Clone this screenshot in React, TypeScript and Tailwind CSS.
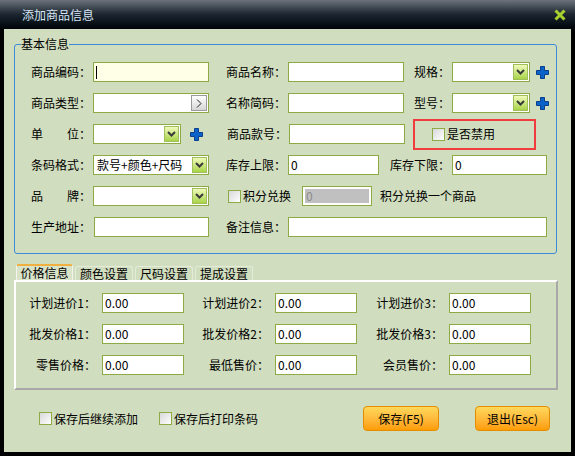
import React from 'react';

const font = { fontFamily: '"Noto Sans CJK SC", "Liberation Sans", sans-serif' };

function Input({ w, value, focus, className = '' }: { w: string; value?: string; focus?: boolean; className?: string }) {
  return (
    <div
      className={`${w} h-[20px] border border-[#8daa45] ${focus ? 'bg-[#ffffe8]' : 'bg-white'} flex items-center px-[2px] text-[12px] text-black ${className}`}
    >
      {focus && <span className="w-px h-[13px] bg-black" />}
      {value}
    </div>
  );
}

function DropBtn() {
  return (
    <span className="ml-auto mr-[1px] w-[15px] h-[16px] border border-[#9fbf5a] bg-gradient-to-b from-[#f0fab8] to-[#a9d444] flex items-center justify-center">
      <svg width="9" height="6" viewBox="0 0 9 6">
        <path d="M1 1 L4.5 4.5 L8 1" stroke="#3a3a3a" strokeWidth="2" fill="none" />
      </svg>
    </span>
  );
}

function Select({ w, value }: { w: string; value?: string }) {
  return (
    <div className={`${w} h-[20px] border border-[#8daa45] bg-white flex items-center pl-[3px] text-[12px] text-black`}>
      {value}
      <DropBtn />
    </div>
  );
}

function Plus({ className = '' }: { className?: string }) {
  return (
    <svg width="13" height="13" viewBox="0 0 13 13" className={className}>
      <path d="M4.5 0.5 H8.5 V4.5 H12.5 V8.5 H8.5 V12.5 H4.5 V8.5 H0.5 V4.5 H4.5 Z" fill="#0b62c9" stroke="#0a3f8c" strokeWidth="1" />
    </svg>
  );
}

function Check({ label }: { label: string }) {
  return (
    <div className="flex items-center gap-[2px] text-[12px] text-black">
      <span className="w-[13px] h-[13px] border border-[#8daa45] bg-gradient-to-br from-[#d8d8d8] to-white" />
      {label}
    </div>
  );
}

function Label({ text, w = 'w-[62px]', right }: { text: string; w?: string; right?: boolean }) {
  return <span className={`${w} shrink-0 text-[12px] text-black whitespace-pre ${right ? 'text-right pr-[2px]' : ''}`}>{text}</span>;
}

function PriceRow({ items }: { items: [string, string][] }) {
  return (
    <div className="flex items-center h-[20px]">
      {items.map(([l, w], i) => (
        <React.Fragment key={i}>
          <span className={`${w} shrink-0 text-right pr-[6px] text-[12px] text-black`}>{l}</span>
          <Input w="w-[82px]" value="0.00" />
        </React.Fragment>
      ))}
    </div>
  );
}

const tabs = ['价格信息', '颜色设置', '尺码设置', '提成设置'];

export default function App() {
  return (
    <div className="w-[575px] h-[456px] bg-black flex flex-col" style={font}>
      <div className="h-[29px] shrink-0 bg-gradient-to-b from-[#6d737b] via-[#1c2630] to-[#02050a] flex items-center pl-[22px] pr-[9px]">
        <span className="text-[12px] text-[#d6e6f6]">添加商品信息</span>
        <svg width="12" height="12" viewBox="0 0 12 12" className="ml-auto">
          <path d="M1.5 1.5 L10.5 10.5 M10.5 1.5 L1.5 10.5" stroke="#a6d12f" strokeWidth="3" />
        </svg>
      </div>

      <div className="flex-1 mx-[4px] mb-[4px] bg-[#d0ddbe] flex flex-col px-[10px] pr-[14px]">
        <fieldset className="mt-[7px] border border-[#3c8ad8] rounded-[3px] pl-[16px] pb-[16px] pt-[10px]">
          <legend className="text-[12px] text-black leading-[16px] -ml-[10px]">基本信息</legend>
          <div className="flex flex-col gap-[11px]">
            <div className="flex items-center h-[20px]">
              <Label text="商品编码：" />
              <Input w="w-[116px]" focus />
              <span className="w-[17px]" />
              <Label text="商品名称：" />
              <Input w="w-[116px]" />
              <Label text="规格：" w="w-[48px]" right />
              <Select w="w-[78px]" />
              <Plus className="ml-[6px]" />
            </div>
            <div className="flex items-center h-[20px]">
              <Label text="商品类型：" />
              <div className="w-[116px] h-[20px] border border-[#8daa45] bg-white flex items-center">
                <span className="ml-auto mr-[1px] w-[16px] h-[16px] bg-gradient-to-b from-white to-[#d6d6d6] border border-[#9a9a9a] flex items-center justify-center">
                  <svg width="6" height="9" viewBox="0 0 6 9">
                    <path d="M1 0.5 L5 4.5 L1 8.5" stroke="#222" strokeWidth="1" fill="none" />
                  </svg>
                </span>
              </div>
              <span className="w-[17px]" />
              <Label text="名称简码：" />
              <Input w="w-[116px]" />
              <Label text="型号：" w="w-[48px]" right />
              <Select w="w-[78px]" />
              <Plus className="ml-[6px]" />
            </div>
            <div className="flex items-center h-[20px]">
              <Label text="单　　位：" />
              <Select w="w-[88px]" />
              <Plus className="ml-[9px]" />
              <span className="w-[24px]" />
              <Label text="商品款号：" />
              <Input w="w-[116px]" />
              <div className="ml-[8px] w-[123px] h-[31px] border-2 border-[#f03c3c] flex items-center pl-[17px]">
                <Check label="是否禁用" />
              </div>
            </div>
            <div className="flex items-center h-[20px]">
              <Label text="条码格式：" />
              <Select w="w-[116px]" value="款号+颜色+尺码" />
              <span className="w-[17px]" />
              <Label text="库存上限：" />
              <Input w="w-[91px]" value="0" />
              <Label text="库存下限：" w="w-[73px]" right />
              <Input w="w-[95px]" value="0" />
            </div>
            <div className="flex items-center h-[20px]">
              <Label text="品　　牌：" />
              <Select w="w-[116px]" />
              <span className="w-[19px]" />
              <Check label="积分兑换" />
              <div className="ml-[11px] w-[70px] h-[20px] border border-[#8daa45] bg-white p-[2px]">
                <div className="h-full bg-[#c0c0c0] text-[12px] leading-[14px] text-[#8a8a8a] pl-[1px]">0</div>
              </div>
              <span className="ml-[8px] text-[12px] text-black">积分兑换一个商品</span>
            </div>
            <div className="flex items-center h-[20px]">
              <Label text="生产地址：" w="w-[63px]" />
              <Input w="w-[115px]" />
              <span className="w-[17px]" />
              <Label text="备注信息：" />
              <Input w="w-[259px]" />
            </div>
          </div>
        </fieldset>

        <div className="mt-[10px] flex items-end h-[16px] pl-[2px] gap-[2px] text-[12px] text-black">
          {tabs.map((t, i) =>
            i === 0 ? (
              <span key={t} className="w-[57px] h-[16px] flex items-center justify-center border border-b-0 border-[#f4f4ec] border-t-2 border-t-[#f0b040] rounded-t-[3px] bg-[#d8e3c8]">
                {t}
              </span>
            ) : (
              <span key={t} className="w-[58px] h-[14px] flex items-center justify-center border border-b-0 border-[#e4ebd8] rounded-t-[3px]">
                {t}
              </span>
            ),
          )}
        </div>
        <div className="h-[110px] border-2 border-t-white border-l-white border-r-[#a8a8a8] border-b-[#a8a8a8] flex flex-col gap-[11px] pt-[11px] -mr-[1px]">
          <PriceRow items={[['计划进价1：', 'w-[86px]'], ['计划进价2：', 'w-[91px]'], ['计划进价3：', 'w-[92px]']]} />
          <PriceRow items={[['批发价格1：', 'w-[86px]'], ['批发价格2：', 'w-[91px]'], ['批发价格3：', 'w-[92px]']]} />
          <PriceRow items={[['零售价格：', 'w-[86px]'], ['最低售价：', 'w-[91px]'], ['会员售价：', 'w-[92px]']]} />
        </div>

        <div className="mt-[16px] flex items-center">
          <span className="w-[25px]" />
          <Check label="保存后继续添加" />
          <span className="w-[21px]" />
          <Check label="保存后打印条码" />
          <button className="ml-auto w-[76px] h-[25px] rounded-[4px] border border-[#e58d00] bg-gradient-to-b from-[#ffd85a] to-[#ff9c00] text-[12px] text-black">
            保存(F5)
          </button>
          <button className="ml-[36px] mr-[7px] w-[75px] h-[25px] rounded-[4px] border border-[#e58d00] bg-gradient-to-b from-[#ffd85a] to-[#ff9c00] text-[12px] text-black">
            退出(Esc)
          </button>
        </div>
      </div>
    </div>
  );
}
